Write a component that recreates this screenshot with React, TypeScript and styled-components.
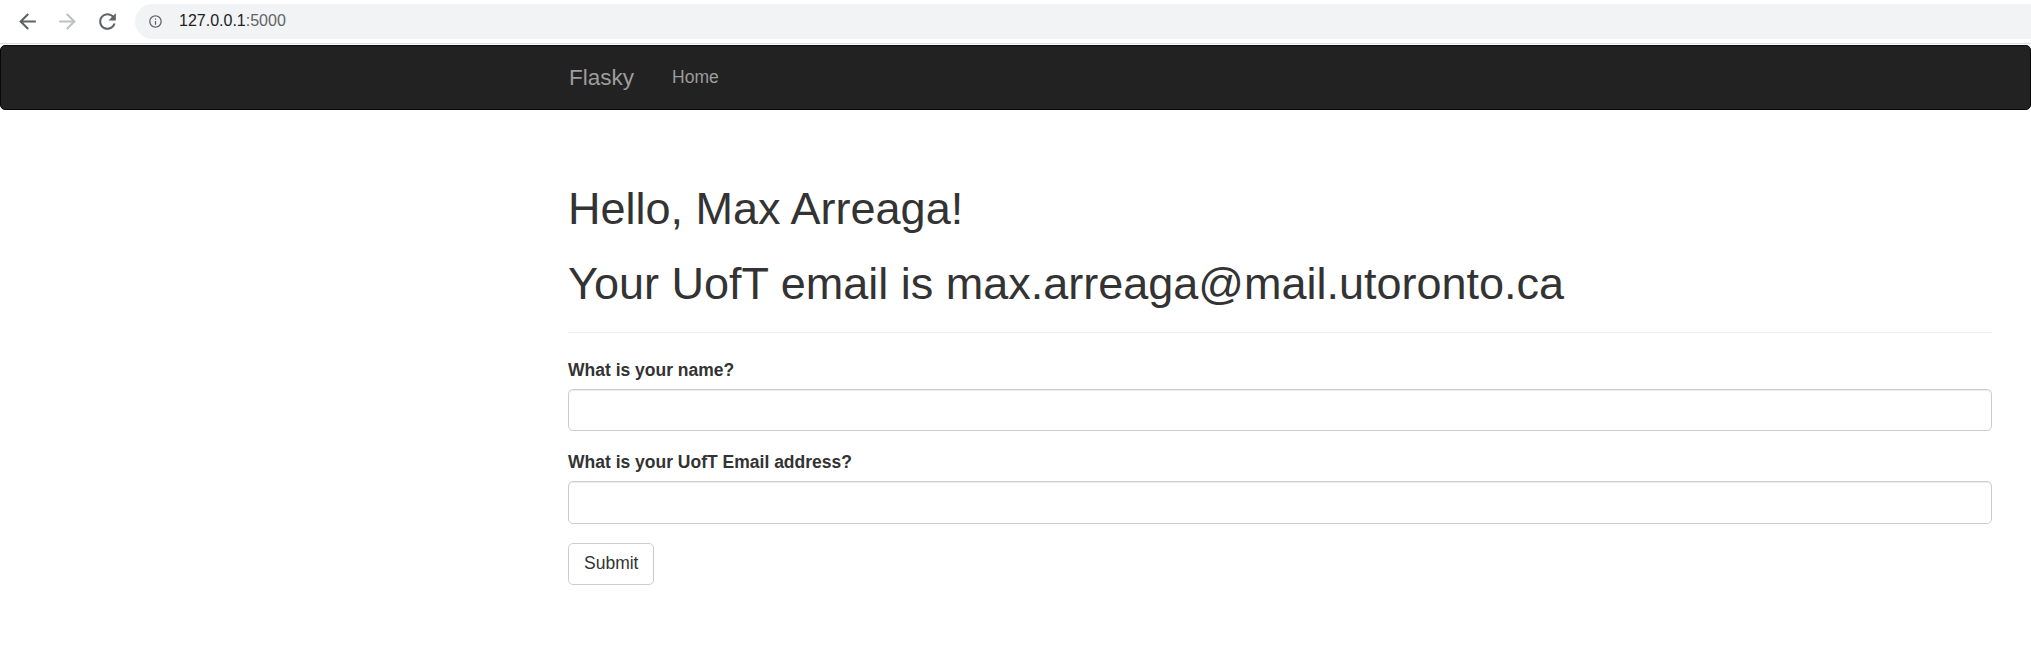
import styled, { createGlobalStyle } from 'styled-components'

const GlobalStyle = createGlobalStyle`
  html, body {
    margin: 0;
    padding: 0;
    background: #fff;
  }
  body {
    font-family: "Liberation Sans", Arial, Helvetica, sans-serif;
    color: #333;
    overflow: hidden;
  }
  * {
    box-sizing: border-box;
  }
`

const Page = styled.div`
  width: 2031px;
  height: 666px;
  overflow: hidden;
`

/* browser chrome */
const Toolbar = styled.div`
  display: flex;
  align-items: center;
  height: 44px;
  padding: 0 0 1px 15px;
  border-bottom: 1px solid #dadce0;
  background: #fff;
`

const NavIcon = styled.span<{ $disabled?: boolean }>`
  display: flex;
  width: 25px;
  height: 25px;
  margin-right: 15px;
  color: ${(p) => (p.$disabled ? '#bdc1c6' : '#5f6368')};

  svg {
    width: 25px;
    height: 25px;
    fill: currentColor;
  }
`

const Omnibox = styled.div`
  flex: 1;
  display: flex;
  align-items: center;
  height: 35px;
  padding-left: 13px;
  border-radius: 18px 0 0 18px;
  background: #f1f3f4;
`

const InfoIcon = styled.span`
  display: flex;
  width: 15px;
  height: 15px;
  color: #5f6368;

  svg {
    width: 15px;
    height: 15px;
    fill: currentColor;
  }
`

const Url = styled.span`
  margin-left: 16px;
  font-size: 16px;
  color: #202124;

  span {
    color: #5f6368;
  }
`

/* bootstrap page */
const Navbar = styled.nav`
  height: 65px;
  margin-top: 1px;
  background-color: #222;
  border: 1px solid #080808;
  border-radius: 5px;
`

const Container = styled.div`
  width: 1462px;
  margin-left: 549px;
  padding: 0 19px;
`

const NavInner = styled.div`
  display: flex;
  align-items: center;
  height: 63px;
`

const Brand = styled.a`
  padding: 19px 19px 19px 0;
  font-size: 22.5px;
  line-height: 25px;
  color: #9d9d9d;
  text-decoration: none;
`

const NavLink = styled.a`
  padding: 19px 19px;
  font-size: 17.5px;
  line-height: 25px;
  color: #9d9d9d;
  text-decoration: none;
`

const Main = styled.div`
  padding-top: 74px;
`

const PageHeader = styled.div`
  padding-bottom: 11px;
  margin-bottom: 25px;
  border-bottom: 1px solid #eee;
`

const Heading = styled.h1`
  margin: 0 0 25px;
  font-size: 45px;
  font-weight: 500;
  line-height: 49.5px;
  color: #333;

  &:last-child {
    margin-bottom: 12.5px;
  }
`

const FormGroup = styled.div`
  margin-bottom: 18.75px;
`

const Label = styled.label`
  display: block;
  margin-bottom: 6.25px;
  font-size: 17.5px;
  font-weight: 700;
  line-height: 25px;
  color: #333;
`

const Input = styled.input`
  display: block;
  width: 100%;
  height: 42.5px;
  padding: 7.5px 15px;
  font-family: inherit;
  font-size: 17.5px;
  color: #555;
  background: #fff;
  border: 1px solid #ccc;
  border-radius: 5px;
  box-shadow: inset 0 1px 1px rgba(0, 0, 0, 0.075);
  outline: none;
`

const Button = styled.button`
  height: 42.5px;
  padding: 7.5px 15px;
  font-family: inherit;
  font-size: 17.5px;
  line-height: 25px;
  color: #333;
  background: #fff;
  border: 1px solid #ccc;
  border-radius: 5px;
  cursor: pointer;
`

const App = () => {
  return (
    <Page>
      <GlobalStyle />
      <Toolbar>
        <NavIcon>
          <svg viewBox="0 0 24 24">
            <path d="M20 11H7.83l5.59-5.59L12 4l-8 8 8 8 1.41-1.41L7.83 13H20v-2z" />
          </svg>
        </NavIcon>
        <NavIcon $disabled>
          <svg viewBox="0 0 24 24">
            <path d="M4 11h12.17l-5.59-5.59L12 4l8 8-8 8-1.41-1.41L16.17 13H4v-2z" />
          </svg>
        </NavIcon>
        <NavIcon>
          <svg viewBox="0 0 24 24">
            <path d="M17.65 6.35C16.2 4.9 14.21 4 12 4c-4.42 0-7.990 3.58-7.99 8s3.57 8 7.99 8c3.73 0 6.84-2.55 7.73-6h-2.08c-.82 2.33-3.04 4-5.65 4-3.31 0-6-2.690-6-6s2.69-6 6-6c1.66 0 3.14.69 4.22 1.78L13 11h7V4l-2.35 2.35z" />
          </svg>
        </NavIcon>
        <Omnibox>
          <InfoIcon>
            <svg viewBox="0 0 24 24">
              <path d="M11 7h2v2h-2zm0 4h2v6h-2zm1-9C6.48 2 2 6.48 2 12s4.48 10 10 10 10-4.48 10-10S17.52 2 12 2zm0 18c-4.41 0-8-3.59-8-8s3.59-8 8-8 8 3.59 8 8-3.59 8-8 8z" />
            </svg>
          </InfoIcon>
          <Url>
            127.0.0.1<span>:5000</span>
          </Url>
        </Omnibox>
      </Toolbar>

      <Navbar>
        <Container>
          <NavInner>
            <Brand href="#">Flasky</Brand>
            <NavLink href="#">Home</NavLink>
          </NavInner>
        </Container>
      </Navbar>

      <Main>
        <Container>
          <PageHeader>
            <Heading>Hello, Max Arreaga!</Heading>
            <Heading>Your UofT email is max.arreaga@mail.utoronto.ca</Heading>
          </PageHeader>
          <form onSubmit={(e) => e.preventDefault()}>
            <FormGroup>
              <Label htmlFor="name">What is your name?</Label>
              <Input id="name" type="text" />
            </FormGroup>
            <FormGroup>
              <Label htmlFor="email">What is your UofT Email address?</Label>
              <Input id="email" type="text" />
            </FormGroup>
            <Button type="submit">Submit</Button>
          </form>
        </Container>
      </Main>
    </Page>
  )
}

export default App
